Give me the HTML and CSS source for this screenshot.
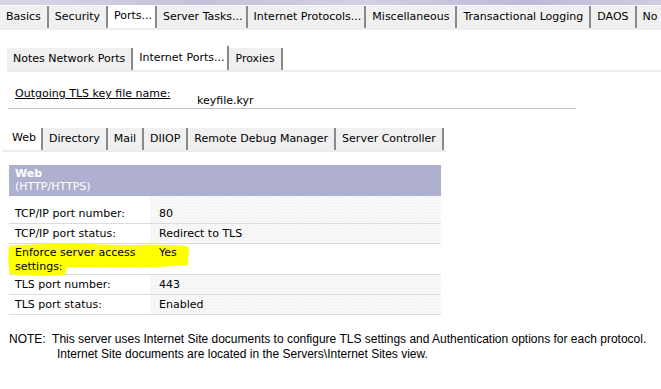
FILE: index.html
```html
<!DOCTYPE html>
<html lang="en">
<head>
  <meta charset="UTF-8">
  <title>Server - Ports - Internet Ports</title>
  <link rel="stylesheet" href="styles.css">
</head>
<body>
  <div class="banner"></div>

  <div class="tabs top">
    <div class="tab">Basics</div>
    <div class="tab">Security</div>
    <div class="tab more active">Ports...</div>
    <div class="tab more">Server Tasks...</div>
    <div class="tab more">Internet Protocols...</div>
    <div class="tab">Miscellaneous</div>
    <div class="tab">Transactional Logging</div>
    <div class="tab">DAOS</div>
    <div class="tab">No</div>
  </div>

  <div class="tabs sub">
    <div class="tab">Notes Network Ports</div>
    <div class="tab more active">Internet Ports...</div>
    <div class="tab">Proxies</div>
  </div>

  <div class="keyfile">
    <span class="key-label">Outgoing TLS key file name:</span>
    <span class="key-value">keyfile.kyr</span>
  </div>

  <div class="tabs proto">
    <div class="tab active">Web</div>
    <div class="tab">Directory</div>
    <div class="tab">Mail</div>
    <div class="tab">DIIOP</div>
    <div class="tab">Remote Debug Manager</div>
    <div class="tab">Server Controller</div>
  </div>

  <div class="panel">
    <div class="panel-head">
      <div class="panel-title">Web</div>
      <div class="panel-sub">(HTTP/HTTPS)</div>
    </div>
    <div class="row first">
      <div class="label">TCP/IP port number:</div>
      <div class="value">80</div>
    </div>
    <div class="row">
      <div class="label">TCP/IP port status:</div>
      <div class="value">Redirect to TLS</div>
    </div>
    <div class="row tall">
      <svg class="marker" width="184" height="34" viewBox="0 0 184 34">
        <path d="M2 3 C30 0 80 1 120 2 C150 2 170 1 182 4 L181 22 C150 25 110 24 60 24 L58 32 C40 33 15 33 3 31 C1 22 1 12 2 3 Z" fill="#ffff00"/>
      </svg>
      <div class="label">Enforce server access settings:</div>
      <div class="value">Yes</div>
    </div>
    <div class="row">
      <div class="label">TLS port number:</div>
      <div class="value">443</div>
    </div>
    <div class="row">
      <div class="label">TLS port status:</div>
      <div class="value">Enabled</div>
    </div>
  </div>

  <div class="note">
    <p>NOTE:&nbsp; This server uses Internet Site documents to configure TLS settings and Authentication options for each protocol.</p>
    <p class="indent">Internet Site documents are located in the Servers\Internet Sites view.</p>
  </div>
</body>
</html>
```

FILE: styles.css
```css
body {
  margin: 0;
  width: 661px;
  height: 389px;
  overflow: hidden;
  background: #fff;
  color: #000;
  font-family: "DejaVu Sans", sans-serif;
  font-size: 11px;
}

.banner {
  height: 5px;
  background: linear-gradient(90deg, #d8d6e6, #c4c2dc 30%, #d2d0e4 55%, #bcbad8 80%, #cfcde2);
}

.tabs {
  display: flex;
  align-items: flex-end;
  white-space: nowrap;
  overflow: hidden;
}

.tab {
  flex: none;
  height: 22px;
  line-height: 22px;
  padding: 0 6px;
  background: #f0f0f0;
  border-right: 2px solid #8a8a8a;
  box-sizing: border-box;
}

.tab.more {
  padding-right: 3px;
}

.tab.active {
  background: #fff;
  height: 24px;
  line-height: 23px;
}

.tabs.top {
  margin-top: 1px;
  height: 22px;
  border-bottom: 2px solid #ececec;
}

.tabs.sub {
  margin: 16px 0 0 7px;
  height: 24px;
  border-bottom: 2px solid #ececec;
}

.keyfile {
  margin: 0 85px 0 8px;
  height: 36px;
  border-bottom: 1px solid #c4c4c4;
  position: relative;
}

.key-label {
  position: absolute;
  left: 7px;
  top: 15px;
  text-decoration: underline;
}

.key-value {
  position: absolute;
  left: 189px;
  top: 22px;
}

.tabs.proto {
  margin: 19px 0 0 3px;
  width: 438px;
  padding-left: 5px;
  height: 22px;
  border-bottom: 2px solid #ececec;
  box-sizing: content-box;
}

.tabs.proto .tab {
  padding: 0 6px;
}

.tabs.proto .tab.active {
  padding: 0 5px 0 4px;
}

.panel {
  margin: 13px 0 0 9px;
  width: 432px;
}

.panel-head {
  background: #afafd0;
  color: #fff;
  height: 31px;
  padding: 2px 6px 0;
  box-sizing: border-box;
  line-height: 13px;
}

.panel-title {
  font-weight: bold;
}

.row {
  display: flex;
  position: relative;
  border-bottom: 1px solid #dcdcdc;
  line-height: 14px;
}

.row .label {
  width: 135px;
  padding: 3px 0 2px 6px;
  position: relative;
}

.row .value {
  flex: 1;
  padding: 3px 9px 2px;
  background-color: #f8f8f8;
  background-image: radial-gradient(#ececec 0.5px, transparent 0.6px);
  background-size: 3px 3px;
  position: relative;
}

.row.first .label,
.row.first .value {
  padding-top: 11px;
}

.row.tall .label,
.row.tall .value {
  padding: 2px 0 0 6px;
  z-index: 2;
}

.row.tall .value {
  padding-left: 9px;
  background: transparent;
}

.marker {
  position: absolute;
  left: -2px;
  top: -1px;
  z-index: 1;
}

.note {
  margin: 17px 0 0 9px;
  font-family: "Liberation Sans", Arial, sans-serif;
  font-size: 12px;
  line-height: 15px;
}

.note p {
  margin: 0;
}

.note .indent {
  padding-left: 48px;
}
```
